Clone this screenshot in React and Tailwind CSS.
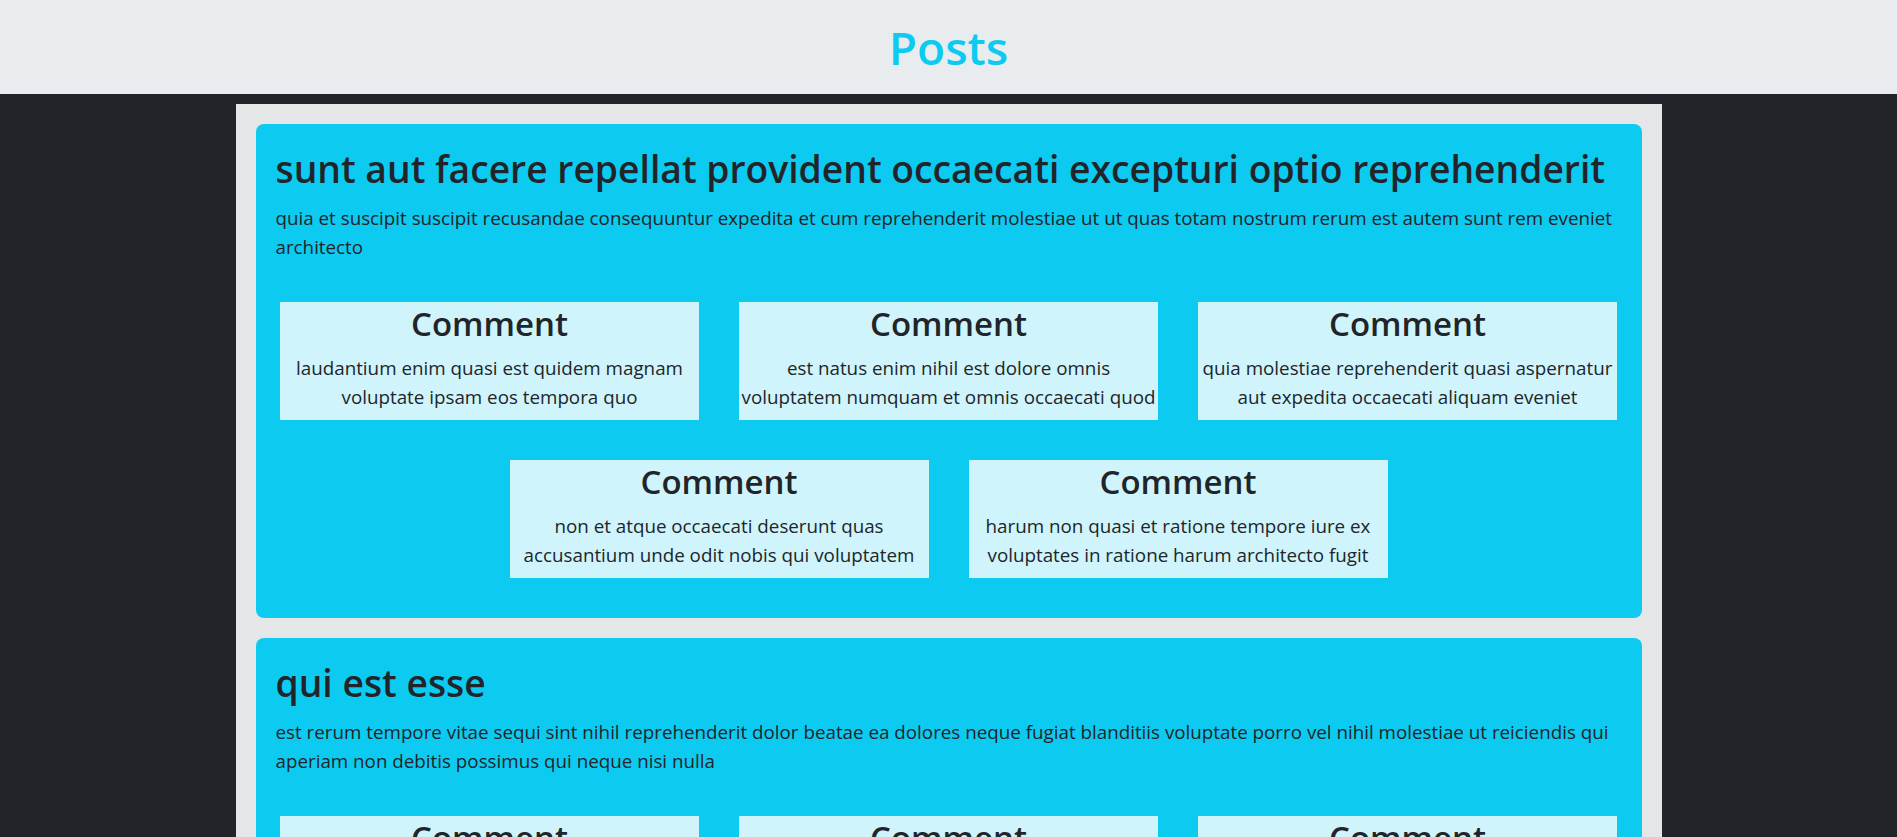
import React from "react";

const POSTS = [
  {
    id: 1,
    title: "sunt aut facere repellat provident occaecati excepturi optio reprehenderit",
    body: "quia et suscipit suscipit recusandae consequuntur expedita et cum reprehenderit molestiae ut ut quas totam nostrum rerum est autem sunt rem eveniet architecto",
    comments: [
      "laudantium enim quasi est quidem magnam voluptate ipsam eos tempora quo",
      "est natus enim nihil est dolore omnis voluptatem numquam et omnis occaecati quod",
      "quia molestiae reprehenderit quasi aspernatur aut expedita occaecati aliquam eveniet",
      "non et atque occaecati deserunt quas accusantium unde odit nobis qui voluptatem",
      "harum non quasi et ratione tempore iure ex voluptates in ratione harum architecto fugit",
    ],
  },
  {
    id: 2,
    title: "qui est esse",
    body: "est rerum tempore vitae sequi sint nihil reprehenderit dolor beatae ea dolores neque fugiat blanditiis voluptate porro vel nihil molestiae ut reiciendis qui aperiam non debitis possimus qui neque nisi nulla",
    comments: [
      "doloribus at sed quis culpa deserunt consectetur qui praesentium accusamus",
      "maiores sed dolores similique labore et inventore et quasi temporibus",
      "ut voluptatem corrupti velit ad voluptatem maiores et nisi velit vero",
      "sapiente assumenda molestiae atque adipisci laborum distinctio aperiam",
      "voluptate iusto quis nobis reprehenderit ipsum amet nulla quia quas",
    ],
  },
];

export default function App() {
  return (
    <div className="min-h-screen bg-[#212529] font-['Open_Sans','Noto_Sans',sans-serif] text-[#212529]">
      <header className="flex h-[94px] items-center justify-center bg-[#e9ecef]">
        <h1 className="text-[46px] font-semibold leading-[56px] text-[#0dcaf0]">Posts</h1>
      </header>

      <main className="mx-auto mt-[10px] flex w-[1426px] flex-col gap-5 bg-[#e5e6e8] px-5 pt-5 pb-5">
        {POSTS.map((p) => (
          <PostCard key={p.id} post={p} />
        ))}
      </main>
    </div>
  );
}

function PostCard({ post }) {
  return (
    <div className="rounded-lg bg-[#0dcaf0] px-5 pt-5 pb-10">
      <h2 className="mb-[10px] text-[37.25px] font-semibold leading-[50px]">{post.title}</h2>
      <p className="text-[18.8px] leading-[29px]">{post.body}</p>

      {/* comments */}
      <div className="mt-10 flex flex-wrap justify-center gap-10">
        {post.comments.map((c, i) => (
          <div key={i} className="w-[419px] bg-[#cff4fc] pt-[1px] pb-2 text-center">
            <h3 className="mb-[10px] text-[33px] font-semibold leading-[41px]">Comment</h3>
            <p className="text-[18.8px] leading-[29px]">{c}</p>
          </div>
        ))}
      </div>
    </div>
  );
}
